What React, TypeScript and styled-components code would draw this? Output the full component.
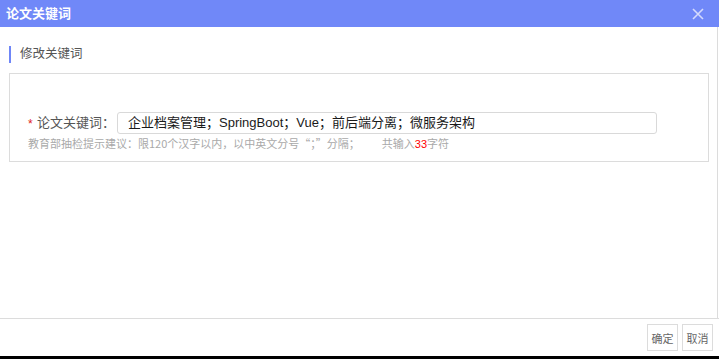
import React from "react";
import styled, { createGlobalStyle } from "styled-components";

const Global = createGlobalStyle`
  *, *::before, *::after { box-sizing: border-box; }
  html, body { margin: 0; padding: 0; background: #000; }
  body { font-family: "Liberation Sans", "Noto Sans CJK SC", sans-serif; }
  #root { width: 719px; }
`;

const Dialog = styled.div`
  width: 719px;
  height: 356px;
  background: #fff;
  display: flex;
  flex-direction: column;
  overflow: hidden;
`;

const Header = styled.div`
  height: 27px;
  flex: none;
  background: #7088f8;
  display: flex;
  align-items: center;
  justify-content: space-between;
  padding: 0 15px 0 6px;
`;

const Title = styled.div`
  color: #fff;
  font-size: 13px;
  font-weight: bold;
  line-height: 27px;
`;

const Close = styled.svg`
  width: 12px;
  height: 12px;
  display: block;
`;

const Body = styled.div`
  flex: 1;
  width: 718px;
  border-right: 1px solid #dcdcdc;
  padding: 19px 8px 0 9px;
  display: flex;
  flex-direction: column;
`;

const SectionTitle = styled.div`
  height: 17px;
  border-left: 2px solid #6f86f7;
  padding-left: 9px;
  font-size: 12.5px;
  line-height: 17px;
  color: #555;
`;

const Box = styled.div`
  margin-top: 10px;
  width: 700px;
  height: 89px;
  border: 1px solid #dcdcdc;
  padding: 38px 0 0 18px;
`;

const Row = styled.div`
  display: flex;
  align-items: center;
  height: 22px;
`;

const Star = styled.span`
  color: #e0201c;
  font-size: 12px;
  width: 9px;
  line-height: 22px;
  padding-top: 2px;
`;

const Label = styled.span`
  font-size: 13px;
  color: #555;
  width: 80px;
  line-height: 22px;
  margin-top: -3px;
  font-family: "Noto Sans CJK SC", sans-serif;
`;

const Input = styled.div`
  width: 540px;
  height: 22px;
  border: 1px solid #d9d9d9;
  border-radius: 3px;
  padding: 0 0 0 10px;
  font-size: 13px;
  line-height: 20px;
  color: #1a1a1a;
  white-space: nowrap;
`;

const Hint = styled.div`
  margin-top: 2px;
  font-size: 11px;
  line-height: 14px;
  color: #a9a9a9;
  white-space: nowrap;
  display: flex;
  font-family: "Noto Sans CJK SC", sans-serif;
`;

const Count = styled.span`
  margin-left: 22px;
`;

const Red = styled.span`
  color: #f00;
  font-family: "Liberation Sans", sans-serif;
`;

const Footer = styled.div`
  flex: none;
  height: 38px;
  border-top: 1px solid #dcdcdc;
  display: flex;
  justify-content: flex-end;
  align-items: flex-start;
  gap: 4px;
  padding: 5px 6px 0 0;
`;

const Button = styled.button`
  width: 31px;
  height: 27px;
  padding: 0;
  border: 1px solid #dcdcdc;
  background: #fff;
  color: #666;
  font-size: 11px;
  font-family: "Noto Sans CJK SC", sans-serif;
`;

export default function App() {
  return (
    <>
      <Global />
      <Dialog>
        <Header>
          <Title>论文关键词</Title>
          <Close viewBox="0 0 12 12">
            <path d="M1 1 L11 11 M11 1 L1 11" stroke="#d4dafc" strokeWidth="1.6" fill="none" />
          </Close>
        </Header>
        <Body>
          <SectionTitle>修改关键词</SectionTitle>
          <Box>
            <Row>
              <Star>*</Star>
              <Label>论文关键词：</Label>
              <Input>企业档案管理；SpringBoot；Vue；前后端分离；微服务架构</Input>
            </Row>
            <Hint>
              <span>教育部抽检提示建议：限120个汉字以内，以中英文分号“；”分隔；</span>
              <Count>
                共输入<Red>33</Red>字符
              </Count>
            </Hint>
          </Box>
        </Body>
        <Footer>
          <Button>确定</Button>
          <Button>取消</Button>
        </Footer>
      </Dialog>
    </>
  );
}
